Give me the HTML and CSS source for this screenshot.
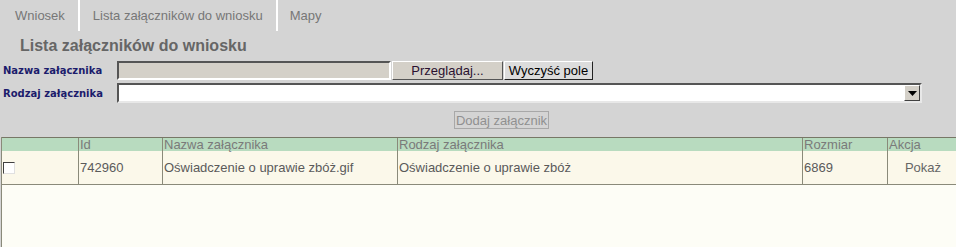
FILE: index.html
```html
<!DOCTYPE html>
<html lang="pl">
<head>
<meta charset="utf-8">
<title>Lista załączników do wniosku</title>
<link rel="stylesheet" href="styles.css">
</head>
<body>
<div class="page">
  <nav class="tabs">
    <span class="tab tab-first">Wniosek</span>
    <span class="tab">Lista załączników do wniosku</span>
    <span class="tab tab-last">Mapy</span>
  </nav>
  <h1 class="title">Lista załączników do wniosku</h1>
  <div class="form">
    <div class="row row-file">
      <label class="label">Nazwa załącznika</label>
      <div class="file-input"></div>
      <button class="btn btn-browse">Przeglądaj...</button>
      <button class="btn btn-clear">Wyczyść pole</button>
    </div>
    <div class="row row-select">
      <label class="label">Rodzaj załącznika</label>
      <div class="select">
        <span class="select-arrow"><svg width="9" height="5" viewBox="0 0 9 5"><path d="M0 0H9L4.5 5Z" fill="#000"/></svg></span>
      </div>
    </div>
    <div class="add-row">
      <button class="btn-add">Dodaj załącznik</button>
    </div>
  </div>
  <div class="grid-wrap">
    <table class="grid">
      <thead>
        <tr>
          <th class="c1"></th>
          <th class="c2">Id</th>
          <th class="c3">Nazwa załącznika</th>
          <th class="c4">Rodzaj załącznika</th>
          <th class="c5">Rozmiar</th>
          <th class="c6">Akcja</th>
        </tr>
      </thead>
      <tbody>
        <tr>
          <td class="c1"><span class="check"></span></td>
          <td class="c2">742960</td>
          <td class="c3">Oświadczenie o uprawie zbóż.gif</td>
          <td class="c4">Oświadczenie o uprawie zbóż</td>
          <td class="c5">6869</td>
          <td class="c6 action">Pokaż</td>
        </tr>
      </tbody>
    </table>
  </div>
</div>
</body>
</html>
```

FILE: styles.css
```css
html, body {
  margin: 0;
  padding: 0;
}
body {
  background: #d4d4d4;
  font-family: "Liberation Sans", Arial, sans-serif;
  width: 956px;
  height: 247px;
  overflow: hidden;
}
.page {
  display: flex;
  flex-direction: column;
  height: 247px;
}
.tabs {
  display: flex;
  height: 31px;
}
.tab {
  display: flex;
  align-items: center;
  padding: 0 13px 0 13px;
  border-right: 2px solid #ffffff;
  color: #777777;
  font-size: 13px;
  height: 31px;
  box-sizing: border-box;
}
.tab-first {
  padding-left: 15px;
}
.tab-last {
  border-right: none;
  padding-left: 12px;
}
.title {
  margin: 0;
  padding: 6px 0 0 20px;
  height: 24px;
  font-size: 16px;
  font-weight: bold;
  color: #666666;
  line-height: 18px;
}
.form {
  display: flex;
  flex-direction: column;
}
.row {
  display: flex;
  align-items: center;
}
.row-file {
  height: 19px;
  margin-bottom: 3px;
}
.row-select {
  height: 20px;
}
.label {
  width: 117px;
  padding-left: 3px;
  box-sizing: border-box;
  font-family: "DejaVu Sans", Tahoma, sans-serif;
  font-size: 10px;
  font-weight: bold;
  color: #1c1c6c;
}
.file-input {
  width: 274px;
  height: 19px;
  box-sizing: border-box;
  background: #d4d0c8;
  border: 2px solid;
  border-color: #555555 #ffffff #ffffff #555555;
}
.btn {
  height: 19px;
  box-sizing: border-box;
  font-family: "Liberation Sans", Arial, sans-serif;
  font-size: 13px;
  padding: 0;
  color: #000000;
  background: #d4d0c8;
  line-height: 15px;
}
.btn-browse {
  width: 111px;
  margin-left: 1px;
  border: 1px solid;
  border-color: #ffffff #555555 #555555 #ffffff;
  color: #2a1030;
}
.btn-clear {
  width: 89px;
  margin-left: 1px;
  border: 1px solid;
  border-color: #ffffff #222222 #222222 #ffffff;
  background: #dcdcdc;
}
.select {
  width: 805px;
  height: 20px;
  box-sizing: border-box;
  background: #ffffff;
  border: 2px solid;
  border-color: #555555 #e8e8e8 #e8e8e8 #555555;
  display: flex;
  justify-content: flex-end;
}
.select-arrow {
  width: 16px;
  height: 16px;
  box-sizing: border-box;
  background: #d4d0c8;
  border: 1px solid;
  border-color: #ffffff #404040 #404040 #ffffff;
  display: flex;
  align-items: center;
  justify-content: center;
}
.add-row {
  display: flex;
  padding: 8px 0 0 454px;
  height: 30px;
  box-sizing: border-box;
}
.btn-add {
  height: 18px;
  width: 95px;
  box-sizing: border-box;
  padding: 0;
  background: #d4d4d4;
  border: 1px solid #a8a8a8;
  color: #909090;
  font-family: "Liberation Sans", Arial, sans-serif;
  font-size: 13px;
  line-height: 15px;
}
.grid-wrap {
  margin-top: 4px;
  margin-left: 1px;
  flex: 1;
  background: #fdfdf6;
  border-left: 1px solid #8a8a7a;
}
.grid {
  border-collapse: collapse;
  width: 955px;
  table-layout: fixed;
  font-size: 13px;
  color: #666666;
}
.grid th {
  background: #b8dbbf;
  font-weight: normal;
  text-align: left;
  height: 13px;
  padding: 0 0 0 1px;
  line-height: 13px;
  border-top: 1px solid #777766;
  border-left: 1px solid #8a8a7a;
  color: #7a7a7a;
}
.grid td {
  background: #fbf8ea;
  height: 33px;
  padding: 0 0 0 1px;
  border-left: 1px solid #8a8a7a;
  border-bottom: 1px solid #8a8a7a;
  color: #5a5a5a;
}
.grid .c1 { width: 75px; border-left: none; }
.grid .c2 { width: 82px; }
.grid .c3 { width: 233px; }
.grid .c4 { width: 403px; }
.grid .c5 { width: 83px; }
.grid td.action {
  text-align: center;
  color: #666666;
}
.check {
  display: block;
  width: 12px;
  height: 12px;
  box-sizing: border-box;
  background: #ffffff;
  border: 1px solid;
  border-color: #404040 #e0e0e0 #e0e0e0 #404040;
}
```
